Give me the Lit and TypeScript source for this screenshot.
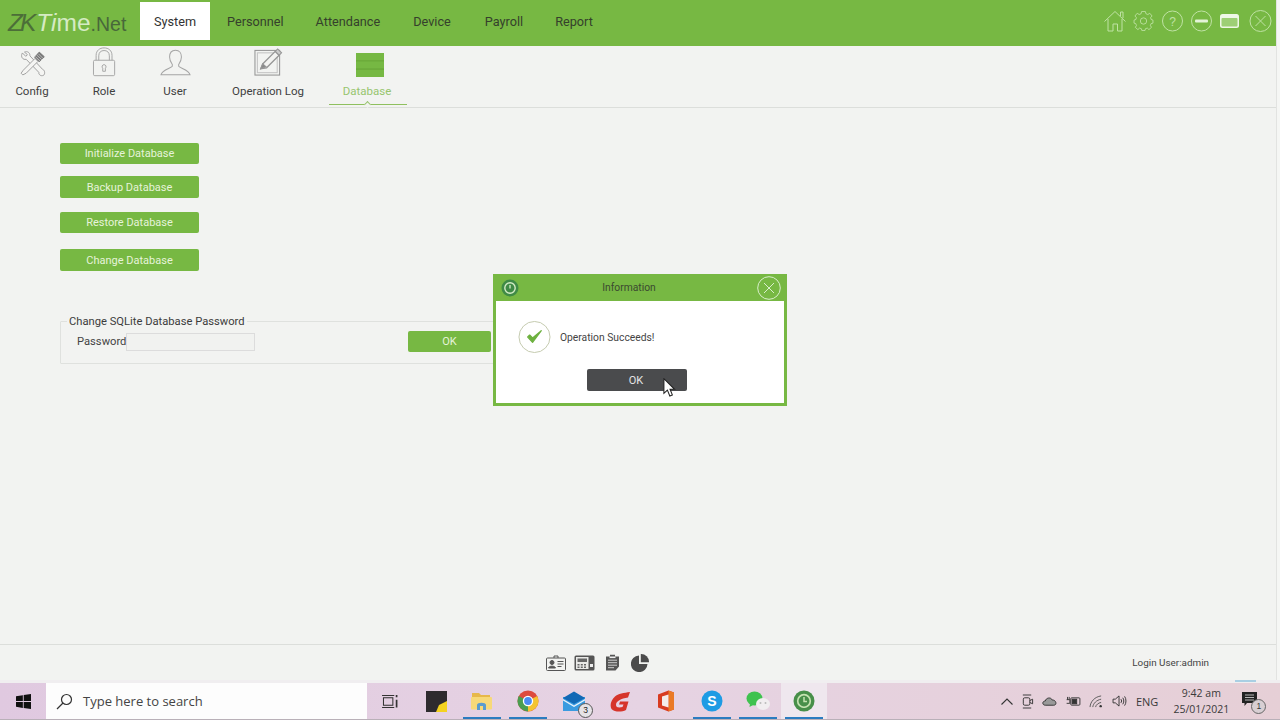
import { LitElement, html, css, svg } from "lit";
import { customElement } from "lit/decorators.js";

const navs = ["System", "Personnel", "Attendance", "Device", "Payroll", "Report"];

const toolIcons: Record<string, unknown> = {
  config: svg`<svg viewBox="0 0 32 32" width="27" height="27" fill="#f5f5f3" stroke="#9a9a9a" stroke-width="1.100">
    <path d="M4 3.500 L8 7.500 L10 5.500 L6.500 2.500 C10 1 13 3 13 7 L28 23 C31 24 31 29 29 30 C26 31.500 23 29 23.500 26.500 L8.500 11 C4.500 12 1.500 8 4 3.500 Z"/>
    <path d="M5 24 L19 10 L22.500 13.500 L8.500 27.500 L4.500 29.500 L2.500 27.500 Z"/>
    <path d="M18.500 8.500 L24 2.500 L30 8 L24 14 Z" fill="#777" stroke="#777"/>
    <path d="M21 6 L27 11.500 M23 4.500 L28.500 10 M19.500 8 L25 13" stroke="#ddd" stroke-width=".8"/>
  </svg>`,
  role: svg`<svg viewBox="0 0 28 34" width="25" height="30" fill="none" stroke="#a5a5a5" stroke-width="1.100">
    <rect x="1.500" y="15" width="24" height="17.500" rx="1.500"/>
    <path d="M4.500 15 V9.500 C4.500 4 8.500 1 13.500 1 C18.500 1 22.500 4 22.500 9.500 V15 M7.500 15 V10 C7.500 6 10 4 13.500 4 C17 4 19.500 6 19.500 10 V15"/>
    <path d="M13.500 20 a2.300 2.300 0 0 1 1.500 4 V27.500 H12 V24 a2.300 2.300 0 0 1 1.500 -4 Z"/>
  </svg>`,
  user: svg`<svg viewBox="0 0 34 30" width="31" height="28" fill="none" stroke="#a5a5a5" stroke-width="1.100">
    <path d="M17 1 C12.500 1 10.500 4.500 10.500 8.500 C10.500 12.500 12.500 15 13.500 16.500 V18.500 C12 21 2.500 22 1 28 H33 C31.500 22 22 21 20.500 18.500 V16.500 C21.500 15 23.500 12.500 23.500 8.500 C23.500 4.500 21.500 1 17 1 Z"/>
  </svg>`,
  log: svg`<svg viewBox="0 0 30 30" width="29" height="29" fill="none" stroke="#969696" stroke-width="1.100">
    <rect x="1" y="2.500" width="25.500" height="25.500"/>
    <rect x="3.500" y="5" width="20.500" height="20.500" stroke="#c4c4c4"/>
    <path d="M7 21.500 L9 16.500 L22 3.500 L26 7.500 L13 20.500 Z" fill="#f3f3f1" stroke-width="1.300"/>
    <path d="M7 21.500 L9 16.500 L12.500 19.500 Z" fill="#888"/>
    <path d="M22 3.500 L24.500 1 L28.500 5 L26 7.500 Z" fill="#ccc"/>
  </svg>`,
  db: svg`<svg viewBox="0 0 28 24" width="28" height="24">
    <rect x="0" y="0" width="28" height="24" rx=".5" fill="#64a035"/>
    <rect x="0" y="0" width="28" height="7.400" rx=".5" fill="#76b843"/>
    <rect x="0" y="8.300" width="28" height="7.300" fill="#76b843"/>
    <rect x="0" y="16.500" width="28" height="7.500" rx=".5" fill="#76b843"/>
  </svg>`,
};

const tools = [
  { id: "config", label: "Config", cls: "t-config" },
  { id: "role", label: "Role", cls: "t-role" },
  { id: "user", label: "User", cls: "t-user" },
  { id: "log", label: "Operation Log", cls: "t-log" },
  { id: "db", label: "Database", cls: "t-db" },
];

const dbButtons = ["Initialize Database", "Backup Database", "Restore Database", "Change Database"];

const winIcons = svg`
  <svg class="wi" viewBox="0 0 172 26" width="172" height="26" fill="none" stroke="#bfe2a4" stroke-width="1">
    <path d="M1.500 13.500 L12 3.500 L22.500 13.500 M5 11 V23 H10 V16 H14.500 V23 H19 V11 M17.500 8 V4 H20 V10"/>
    <g transform="translate(40.500 13) scale(.86)">
      <circle r="3.700"/>
      <path d="M-2.200 -10 H2.200 L2.800 -7.500 L5 -6.500 L7.300 -8 L10 -4.800 L8.300 -3 L8.800 -.8 L11 0 V3.500 L8.800 4 L8 6.200 L9.300 8.400 L6.300 11 L4.400 9.200 L2.200 10 L1.800 12 H-2 L-2.400 10 L-4.600 9.200 L-6.500 11 L-9.500 8.400 L-8.200 6.200 L-9 4 L-11 3.500 V0 L-8.800 -.8 L-8.300 -3 L-10 -4.800 L-7.300 -8 L-5 -6.500 L-2.800 -7.500 Z" transform="translate(0 -1)"/>
    </g>
    <circle cx="69.500" cy="13" r="10"/>
    <text x="69.500" y="17.500" font-size="12" font-family="Liberation Sans" fill="#bfe2a4" stroke="none" text-anchor="middle">?</text>
    <circle cx="98.500" cy="13" r="10"/>
    <rect x="92" y="11.600" width="13" height="2.800" rx="1" fill="#e4f3d8" stroke="none"/>
    <rect x="117" y="6" width="19" height="14" rx="2.500" fill="#eef7e6" stroke="none"/>
    <rect x="118.500" y="10" width="16" height="8.600" rx="1" fill="#9dcf75" stroke="none"/>
    <circle cx="157.500" cy="13" r="10.500"/>
    <path d="M152.500 8 L162.500 18 M162.500 8 L152.500 18" stroke-width="1"/>
  </svg>`;

const footIcons = [
  svg`<svg viewBox="0 0 20 16" width="20" height="16" fill="none" stroke="#555" stroke-width="1"><rect x=".5" y="3" width="19" height="12.500" rx="1"/><path d="M8 3 V1 H12 V3"/><circle cx="6" cy="7.500" r="2" fill="#555"/><path d="M2.500 13 C3 10.500 9 10.500 9.500 13 Z" fill="#555"/><path d="M11.500 6.500 H17.500 M11.500 9 H17.500 M11.500 11.500 H15.500"/></svg>`,
  svg`<svg viewBox="0 0 21 16" width="21" height="16"><rect x=".5" y=".5" width="20" height="15" rx="1.500" fill="#555"/><rect x="2" y="2" width="12.500" height="12" fill="#e9e9e7"/><rect x="3.500" y="3.500" width="9.500" height="3.500" fill="#666"/><path d="M3.500 9 h2 v1.500 h-2z M6.800 9 h2 v1.500 h-2z M10 9 h2 v1.500 h-2z M3.500 11.500 h2 v1.500 h-2z M6.800 11.500 h2 v1.500 h-2z M10 11.500 h2 v1.500 h-2z" fill="#666"/><rect x="16" y="9" width="3" height="3" fill="#eee"/></svg>`,
  svg`<svg viewBox="0 0 15 17" width="15" height="17"><path d="M1 2.500 H5 V.8 H10 V2.500 H14 V12.500 L10.500 16.500 H1 Z" fill="#555"/><rect x="4.500" y="2.500" width="6" height="1.600" fill="#eee"/><path d="M3 6.200 H12 M3 8.700 H12 M3 11.200 H12 M3 13.700 H9" stroke="#ddd" stroke-width=".9"/></svg>`,
  svg`<svg viewBox="0 0 18 18" width="18" height="18"><path d="M8 1.500 V10 H16.500 A8.300 8.300 0 1 1 8 1.500 Z" fill="#4b4b4b"/><path d="M9.800 0 A8 8 0 0 1 18 8.200 H9.800 Z" fill="#4b4b4b"/></svg>`,
];

const taskIcons = [
  svg`<svg viewBox="0 0 18 16" width="17" height="15" fill="none" stroke="#333" stroke-width="1.100"><rect x="1.500" y="4" width="10" height="8"/><path d="M0 1.500 H13 M0 14.500 H13"/><path d="M15.500 1 V3.500 M15.500 6 V14.500" stroke-width="1.800"/></svg>`,
  svg`<svg viewBox="0 0 21 21" width="21" height="21"><rect width="21" height="21" fill="#2e2b2e"/><path d="M10 21 L13 14 L21 10 V21 Z" fill="#f4d21f"/></svg>`,
  svg`<svg viewBox="0 0 22 19" width="22" height="19"><path d="M1 1 H8 L10 3 H19 V6 H1 Z" fill="#e7b84a"/><rect x="0" y="5" width="21" height="12.500" rx="1" fill="#f7d978"/><path d="M6 13 C6 10 15 10 15 13 V18 H6 Z" fill="#5a9ccf"/><rect x="9" y="14" width="3" height="4" fill="#f7d978"/></svg>`,
  svg`<svg viewBox="0 0 22 22" width="22" height="22"><circle cx="11" cy="11" r="10.500" fill="#dd4b3e"/><path d="M11 11 L20.200 6 A10.500 10.500 0 0 1 11 21.500 Z" fill="#f4c430"/><path d="M11 11 L11 21.500 A10.500 10.500 0 0 1 1.800 6 Z" fill="#4a9e50"/><circle cx="11" cy="11" r="5.200" fill="#fff"/><circle cx="11" cy="11" r="3.900" fill="#4a8cf0"/></svg>`,
  svg`<svg viewBox="0 0 23 20" width="23" height="20"><rect x="0" y="6" width="22" height="14" fill="#3a9be0"/><path d="M0 7 L11 .5 L22 7 L11 13 Z" fill="#1269b5"/><path d="M0 8 L11 14.500 L22 8 V9.500 L11 16 L0 9.500 Z" fill="#e8f2fa"/></svg>`,
  svg`<svg viewBox="0 0 21 21" width="21" height="21"><path d="M20 1 C14 2 8 2.500 5 5.500 C1 9 -.5 14 1.500 18 C5 21.500 12 21 16 19 L18.500 10.500 H10 L9 13.500 H13.500 L12.500 16 C9 17 6 16.500 6 14 C6 10 11 7.500 18 6.500 Z" fill="#d6352b"/></svg>`,
  svg`<svg viewBox="0 0 18 22" width="18" height="22"><path d="M1 4.500 L11.500 .5 L17 2.500 V19.500 L11.500 21.500 L1 17.500 Z" fill="#d83b20"/><path d="M11.500 .5 L17 2.500 V19.500 L11.500 21.500 Z" fill="#ea7a26"/><path d="M5 6.500 L11.500 4.500 V17.500 L5 15.500 Z" fill="#f4ecea"/></svg>`,
  svg`<svg viewBox="0 0 22 22" width="22" height="22"><circle cx="11" cy="11" r="10.500" fill="#1e9be4"/><text x="11" y="16" font-size="14" font-family="Liberation Sans" font-weight="700" fill="#fff" text-anchor="middle">S</text></svg>`,
  svg`<svg viewBox="0 0 24 20" width="24" height="20"><ellipse cx="8.500" cy="7.500" rx="8" ry="7" fill="#3fc24f"/><path d="M4 12 L3.500 16 L8 13.500 Z" fill="#3fc24f"/><ellipse cx="17" cy="13" rx="7" ry="6" fill="#f1eef0"/><circle cx="14.500" cy="12" r="1" fill="#bbb"/><circle cx="19.500" cy="12" r="1" fill="#bbb"/></svg>`,
  svg`<svg viewBox="0 0 22 22" width="22" height="22" fill="none"><circle cx="11" cy="11" r="10.500" fill="#478f49"/><circle cx="11" cy="11" r="6.300" stroke="#c4e2b0" stroke-width="1.700"/><path d="M11 7 V11.500 H14" stroke="#c4e2b0" stroke-width="1.500"/><path d="M8 18 L14 18 L11 21Z" fill="#478f49"/></svg>`,
];
const taskIds = ["tv", "sticky", "folder", "chrome", "mail", "gfx", "office", "skype", "wechat", "zk"];

@customElement("app-root")
export class AppRoot extends LitElement {
  static styles = css`
    :host { display: block; width: 1280px; height: 720px; position: relative; overflow: hidden; background: #f5f6f4;
      font-family: Roboto, "Noto Sans", sans-serif; color: #3a3a3a; }
    .page { display: flex; flex-direction: column; height: 720px; }
    .win { flex: 1; width: 1277px; display: flex; flex-direction: column; background: #f2f3f1; border-right: 1px solid #e2e3e1; box-sizing: border-box; min-height: 0; }
    .head { height: 46px; flex: none; background: #77b843; display: flex; align-items: flex-start; }
    .logo { width: 140px; box-sizing: border-box; padding-left: 8px; height: 46px; line-height: 46px; font-size: 24.500px; font-family: "Liberation Sans", sans-serif; white-space: nowrap; color: #4c6e38; }
    .logo .zk { font-style: italic; letter-spacing: -3px; padding-right: 3px; }
    .logo .time { color: #d5ebc3; font-style: italic; }
    .logo .net { font-size: 19.500px; color: #48683a; }
    .logo .time2 { color: #d5ebc3; }
    .nav { display: flex; }
    .nav div { font-size: 12.700px; height: 38px; margin-top: 2px; line-height: 39px; color: #35402c; padding: 0 16px; }
    .nav div:nth-child(4) { margin-left: 1px; }
    .nav div:nth-child(5) { margin-left: 2px; }
    .nav .on { width: 70px; box-sizing: border-box; text-align: center; background: #fff; padding: 0; color: #333; margin-right: 1px; }
    .wi { margin-left: auto; margin-top: 8px; margin-right: 1px; }
    .tools { height: 62px; flex: none; border-bottom: 1px solid #dcdedb; box-sizing: border-box; display: flex; position: relative; }
    .tool { display: flex; flex-direction: column; align-items: center; position: relative; font-size: 11.500px; color: #3f3f3f; height: 60px; }
    .tool .ic { height: 31px; display: flex; align-items: flex-end; justify-content: center; }
    .tool .lb { line-height: 16px; margin-top: 6px; white-space: nowrap; }
    .t-config { width: 64px; }
    .t-role { width: 80px; }
    .t-user { width: 62px; }
    .t-log { width: 124px; }
    .t-db { width: 78px; margin-left: -1px; color: #97c56f; }
    .t-db .lb { margin-right: 2px; }
    .t-db .ic { align-items: flex-start; padding: 7px 0 0 4px; height: 24px; }
    .t-db::after { content: ""; position: absolute; left: 0; right: 0; top: 57.500px; height: 1.500px; background: #8fc05f; }
    .t-db::before { content: ""; position: absolute; left: 36px; top: 55.500px; width: 4px; height: 4px; background: #f2f3f1; border-left: 1px solid #9bc571; border-top: 1px solid #9bc571; transform: rotate(45deg); z-index: 1; }
    .main { flex: 1; padding: 35px 0 0 60px; min-height: 0; }
    .btns { display: flex; flex-direction: column; width: 139px; }
    .gbtn { background: #77b843; color: #e6f3da; font-size: 11px; text-align: center; border-radius: 2px; height: 21px; line-height: 21px; }
    .btns .gbtn:nth-child(1) { margin-bottom: 12px; }
    .btns .gbtn:nth-child(2) { margin-bottom: 14px; height: 22px; line-height: 23px; }
    .btns .gbtn:nth-child(3) { margin-bottom: 16px; }
    .btns .gbtn:nth-child(4) { height: 22px; line-height: 23px; }
    fieldset { margin: 43px 0 0; padding: 0; width: 440px; height: 50px; box-sizing: border-box; border: 1px solid #dfe1de; border-radius: 1px; display: flex; align-items: flex-start; }
    legend { margin-left: 6px; padding: 0 2px; font-size: 11.200px; line-height: 15px; color: #3c3c3c; white-space: nowrap; }
    .row { display: flex; align-items: center; height: 21px; margin-top: 2px; width: 100%; }
    .row label { font-size: 11.200px; margin-left: 16px; width: 49px; color: #444; }
    .input { width: 129px; height: 18px; box-sizing: border-box; border: 1px solid #dcdcdc; background: #f1f2f0; }
    .okb { width: 83px; margin-left: 153px; height: 21px; line-height: 21px; flex: none; }
    .foot { height: 35px; flex: none; border-top: 1px solid #dcdedb; display: flex; align-items: center; position: relative; }
    .foot .ics { display: flex; align-items: center; margin-left: 546px; }
    .foot .ics svg:nth-child(2) { margin-left: 8px; }
    .foot .ics svg:nth-child(3) { margin-left: 10px; }
    .foot .ics svg:nth-child(4) { margin-left: 11px; }
    .foot .user { margin-left: auto; margin-right: 67px; font-size: 9.900px; color: #444; }
    .strip { height: 3px; flex: none; background: #f0eef0; position: relative; }
    .strip i { position: absolute; left: 1235px; width: 21px; top: 0; height: 2px; background: #a9cfe3; }
    .task { height: 37px; flex: none; display: flex; align-items: stretch; background: linear-gradient(90deg, #e0c9e0 0%, #e6d3e3 50%, #e6cfd6 100%); border-bottom: 1px solid #b9b0b8; box-sizing: border-box; position: relative; }
    .start { width: 46px; display: flex; align-items: center; justify-content: center; }
    .search { width: 321px; background: #fdfdfd; display: flex; align-items: center; font-size: 13px; color: #444; font-family: "Open Sans", sans-serif; }
    .search svg { margin-left: 10px; margin-right: 10px; }
    .apps { display: flex; }
    .app { width: 46px; display: flex; align-items: center; justify-content: center; position: relative; }
    .app.run::after { content: ""; position: absolute; left: 4px; right: 4px; bottom: 0; height: 2px; background: #2b7cc0; }
    .app.zk { background: #efe7ee; }
    .badge3 { position: absolute; left: 27px; top: 20px; width: 13px; height: 13px; border-radius: 50%; border: 1px solid #555; background: #e6e3e6; font-size: 8.500px; line-height: 13px; text-align: center; color: #222; font-family: "Liberation Sans", sans-serif; }
    .tray { position: absolute; left: 1001px; top: 0; bottom: 0; right: 0; display: flex; align-items: center; color: #3a3a3a; }
    .tray svg { flex: none; }
    .tray .tic { display: flex; align-items: center; gap: 8.200px; }
    .eng { font-size: 11px; margin-left: 9px; font-family: "Open Sans", sans-serif; }
    .clock { font-size: 10.500px; text-align: center; line-height: 16px; width: 64px; margin-left: 11px; font-family: "Open Sans", sans-serif; }
    .note { position: relative; margin-left: 9px; height: 20px; }
    .badge1 { position: absolute; left: 9px; top: 8px; width: 13px; height: 13px; border-radius: 50%; border: 1px solid #666; background: #d8cfd3; font-size: 8.500px; line-height: 13px; text-align: center; font-family: "Liberation Sans", sans-serif; }
    .dialog { position: absolute; left: 493px; top: 274px; width: 294px; height: 132px; box-sizing: border-box; background: #77b843; padding: 0 3px 3px; display: flex; flex-direction: column; }
    .dtitle { height: 27px; flex: none; display: flex; align-items: center; position: relative; }
    .dtitle .t { position: absolute; left: 0; right: 22px; text-align: center; font-size: 10.300px; color: #3b4a30; }
    .dtitle .logoic { margin-left: 5px; }
    .dtitle .x { margin-left: auto; margin-right: 3px; }
    .dbody { flex: 1; background: #fff; display: flex; flex-direction: column; }
    .msg { display: flex; align-items: center; margin: 19px 0 0 22px; font-size: 10.300px; color: #444; gap: 9px; }
    .dok { width: 100px; height: 22px; line-height: 24px; align-self: flex-start; margin: 15px 0 0 91px; background: #4a4b4d; color: #e5e5e5; font-size: 11px; text-align: center; border-radius: 2px; padding-right: 2px; box-sizing: border-box; }
    .cursor { position: absolute; left: 663px; top: 378px; }
  `;

  render() {
    return html`
      <div class="page">
        <div class="win">
          <div class="head">
            <div class="logo"><span class="zk">ZK</span><span class="time">Ti</span><span class="time2">me</span><span class="net">.Net</span></div>
            <div class="nav">${navs.map((n, i) => html`<div class=${i === 0 ? "on" : ""}>${n}</div>`)}</div>
            ${winIcons}
          </div>
          <div class="tools">
            ${tools.map((t) => html`<div class="tool ${t.cls}"><div class="ic">${toolIcons[t.id]}</div><div class="lb">${t.label}</div></div>`)}
          </div>
          <div class="main">
            <div class="btns">${dbButtons.map((b) => html`<div class="gbtn">${b}</div>`)}</div>
            <fieldset>
              <legend>Change SQLite Database Password</legend>
              <div class="row"><label>Password</label><div class="input"></div><div class="gbtn okb">OK</div></div>
            </fieldset>
          </div>
          <div class="foot">
            <div class="ics">${footIcons}</div>
            <div class="user">Login User:admin</div>
          </div>
        </div>
        <div class="strip"><i></i></div>
        <div class="task">
          <div class="start"><svg viewBox="0 0 16 16" width="15" height="15" fill="#111"><path d="M0 2.300 L7.300 1.200 V7.500 H0 Z M8.200 1 L16 0 V7.500 H8.200 Z M0 8.500 H7.300 V14.800 L0 13.700 Z M8.200 8.500 H16 V16 L8.200 15 Z"/></svg></div>
          <div class="search"><svg viewBox="0 0 17 17" width="17" height="17" fill="none" stroke="#333" stroke-width="1.200"><circle cx="10.500" cy="6.500" r="5"/><path d="M7 10 L1 16"/></svg><span>Type here to search</span></div>
          <div class="apps">
            ${taskIcons.map((ic, i) => html`<div class="app ${[2, 3, 7, 8].includes(i) ? "run" : ""} ${taskIds[i] === "zk" ? "zk run" : ""}">${ic}${taskIds[i] === "mail" ? html`<span class="badge3">3</span>` : ""}</div>`)}
          </div>
          <div class="tray">
            <div class="tic">
              <svg viewBox="0 0 12 7" width="12" height="7" fill="none" stroke="#333" stroke-width="1.100"><path d="M.5 6.500 L6 1 L11.500 6.500"/></svg>
              <svg viewBox="0 0 14 16" width="13" height="15" fill="none" stroke="#333" stroke-width="1"><path d="M2 1 H11 M2 15 H11"/><rect x="2.500" y="4" width="7" height="8" rx="1.500"/><path d="M9.500 7 L12.500 5.500 V10.500 L9.500 9"/></svg>
              <svg viewBox="0 0 16 10" width="15" height="10"><path d="M3.500 9.500 C0 9.500 0 5 3.500 5 C4 2 9 0 11 4 C15 3.500 16.500 9.500 12.500 9.500 Z" fill="#999" stroke="#333"/></svg>
              <svg viewBox="0 0 16 12" width="15" height="11" fill="none" stroke="#333"><path d="M.5 4 H4 V8 H.5 M1.500 1 V4 M3.300 1 V4" /><rect x="5" y="2" width="10" height="8" rx="1" /><rect x="6.500" y="3.500" width="5" height="5" fill="#333"/></svg>
              <svg viewBox="0 0 16 14" width="15" height="13" fill="none" stroke="#555"><path d="M1 13 C1.500 7 6 2 13 1 M4 13 C4.500 9 8 5.500 13 4.500 M7 13 C7.500 10.500 10 8.500 13 8" /><circle cx="12.500" cy="12" r="1.300" fill="#333" stroke="none"/></svg>
              <svg viewBox="0 0 16 13" width="15" height="12" fill="none" stroke="#333"><path d="M1 4.500 H3.500 L7.500 1 V12 L3.500 8.500 H1 Z"/><path d="M9.500 4.500 C10.500 5.500 10.500 7.500 9.500 8.500 M11.500 3 C13 4.500 13 8.500 11.500 10 M13.500 1.500 C15.500 4 15.500 9 13.500 11.500"/></svg>
            </div>
            <div class="eng">ENG</div>
            <div class="clock">9:42 am<br />25/01/2021</div>
            <div class="note">
              <svg viewBox="0 0 15 14" width="15" height="14"><path d="M0 0 H15 V11 H5 L2.500 14 V11 H0 Z" fill="#222"/><path d="M3 3 H12 M3 5.500 H12 M3 8 H12" stroke="#ddd" stroke-width=".8"/></svg>
              <span class="badge1">1</span>
            </div>
          </div>
        </div>
      </div>
      <div class="dialog">
        <div class="dtitle">
          <svg class="logoic" viewBox="0 0 18 18" width="18" height="18" fill="none"><circle cx="9" cy="9" r="8.500" fill="#3f8a46"/><circle cx="9" cy="9" r="5.200" stroke="#d5ecc6" stroke-width="1.400"/><path d="M9 6 V9.500" stroke="#d5ecc6" stroke-width="1.300"/></svg>
          <span class="t">Information</span>
          <svg class="x" viewBox="0 0 24 24" width="24" height="24" fill="none" stroke="#d9eecb" stroke-width="1"><circle cx="12" cy="12" r="11.300"/><path d="M7 7 L17 17 M17 7 L7 17"/></svg>
        </div>
        <div class="dbody">
          <div class="msg">
            <svg viewBox="0 0 34 34" width="33" height="34" fill="none"><circle cx="17" cy="17" r="16" stroke="#c3c9ad" stroke-width="1"/><path d="M10 17 L15 22.500 L24 10.500 L15 18 L12 15 Z" fill="#6db13f" stroke="#6db13f" stroke-width="1.300" stroke-linejoin="round"/></svg>
            <span>Operation Succeeds!</span>
          </div>
          <div class="dok">OK</div>
        </div>
      </div>
      <svg class="cursor" viewBox="0 0 12 18" width="13" height="19"><path d="M.7 .7 V14.500 L4 11.500 L6.300 17 L8.700 16 L6.500 10.700 H10.800 Z" fill="#fff" stroke="#222" stroke-width="1"/></svg>
    `;
  }
}
